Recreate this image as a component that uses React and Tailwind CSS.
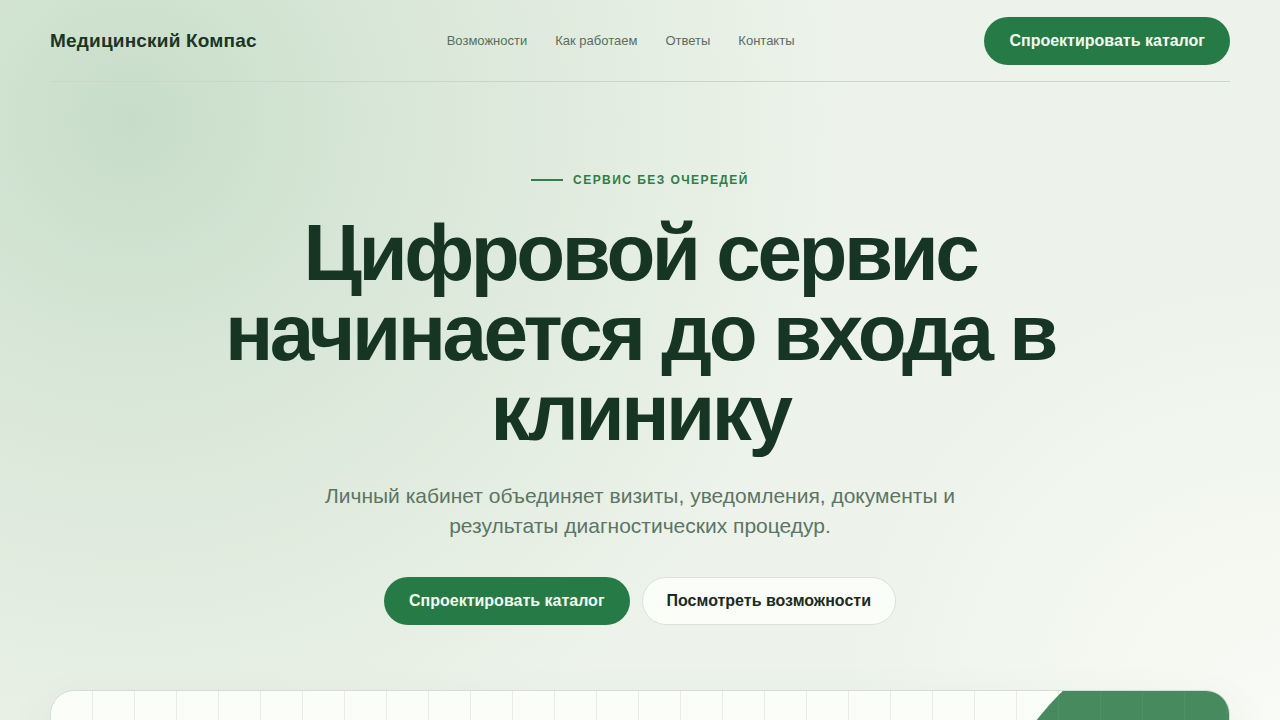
import React from "react";

const navLinks = ["Возможности", "Как работаем", "Ответы", "Контакты"];

const Header = () => (
  <header className="mx-[50px] flex items-center justify-between border-b border-[#cad6c8] pt-[17px] pb-4">
    <a href="#" className="text-[19px] font-bold tracking-[0.01em] text-[#1a3524]">
      Медицинский Компас
    </a>
    <nav className="flex items-center gap-7 text-[13px] text-[#5a6d5f]">
      {navLinks.map((link) => (
        <a key={link} href="#">
          {link}
        </a>
      ))}
    </nav>
    <a
      href="#"
      className="flex h-12 items-center rounded-full bg-[#267a46] px-[25px] text-base font-bold text-[#f3faf0]"
    >
      Спроектировать каталог
    </a>
  </header>
);

const Hero = () => (
  <section className="flex flex-col items-center pt-[90px] text-center">
    <div className="flex items-center gap-[10px] text-xs font-bold uppercase tracking-[0.12em] text-[#2f7d4a]">
      <span className="h-[2px] w-8 bg-[#2f7d4a]" />
      Сервис без очередей
    </div>
    <h1 className="mt-[25px] max-w-[900px] text-[80px] leading-[80px] font-bold tracking-[-0.043em] text-[#173523]">
      Цифровой сервис начинается до входа в клинику
    </h1>
    <p className="mt-7 max-w-[680px] text-[21px] leading-[30px] text-[#5c7564]">
      Личный кабинет объединяет визиты, уведомления, документы и результаты
      диагностических процедур.
    </p>
    <div className="mt-9 flex items-center gap-3">
      <a
        href="#"
        className="flex h-12 items-center rounded-full bg-[#267a46] px-[25px] text-base font-bold text-[#f3faf0]"
      >
        Спроектировать каталог
      </a>
      <a
        href="#"
        className="flex h-12 items-center rounded-full border border-[#dbe3d8] bg-[#fbfdf8] px-6 text-base font-bold text-[#1a2a1f]"
      >
        Посмотреть возможности
      </a>
    </div>
  </section>
);

// Dashboard preview card with a faint grid and a green blob in the corner
const Preview = () => (
  <div className="relative mx-[50px] mt-[65px] h-[320px] overflow-hidden rounded-[24px] border border-[#d6ded3] bg-[#fbfdf8] shadow-[0_20px_50px_rgba(40,80,50,0.08)]">
    <div className="absolute inset-0 bg-[linear-gradient(to_right,#e6ebe3_1px,transparent_1px)] bg-[size:42px_100%] bg-[position:-1px_0]" />
    <div className="absolute top-[-85px] left-[921px] h-[600px] w-[600px] rounded-full bg-[#468a5d]" />
    <div className="absolute inset-0 bg-[linear-gradient(to_right,rgba(255,255,255,0.05)_1px,transparent_1px)] bg-[size:42px_100%] bg-[position:-1px_0]" />
  </div>
);

export default function App() {
  return (
    <div className="relative h-[720px] overflow-hidden bg-[#edf3ea] font-['Liberation_Sans',Arial,sans-serif]">
      <div className="pointer-events-none absolute inset-0 bg-[radial-gradient(circle_at_130px_120px,#c7ddc9_0%,rgba(205,224,205,0.7)_18%,rgba(237,243,234,0)_55%)]" />
      <div className="pointer-events-none absolute inset-0 bg-[radial-gradient(circle_at_1280px_720px,rgba(250,252,247,0.9)_0%,rgba(250,252,247,0)_30%)]" />
      <div className="relative">
        <Header />
        <Hero />
        <Preview />
      </div>
    </div>
  );
}
